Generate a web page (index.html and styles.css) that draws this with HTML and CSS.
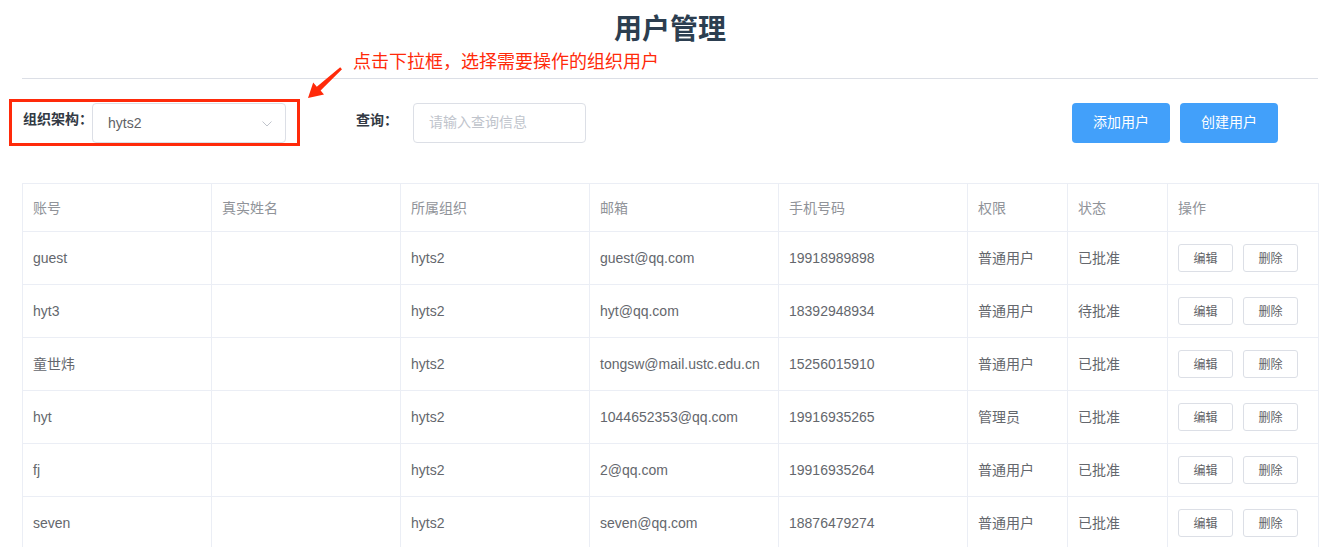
FILE: index.html
```html
<!DOCTYPE html>
<html lang="zh-CN">
<head>
<meta charset="utf-8">
<title>用户管理</title>
<link rel="stylesheet" href="styles.css">
</head>
<body>
<div class="page">
  <div class="head">
    <h1 class="title">用户管理</h1>
  </div>
  <div class="note">点击下拉框，选择需要操作的组织用户</div>
  <svg class="arrow" width="50" height="45" viewBox="0 0 50 45">
    <polygon points="8,38 24,34.5 20.6,30.6 42,9.2 40.2,7.2 16.8,26.8 13.2,22.6" fill="#ff2a0a"/>
  </svg>
  <div class="filters">
    <div class="mark">
      <span class="label">组织架构：</span>
      <div class="select">
        <span class="select-value">hyts2</span>
        <svg class="chev" width="10" height="6" viewBox="0 0 10 6"><path d="M0.5 0.5 L5 5 L9.5 0.5" fill="none" stroke="#c0c4cc" stroke-width="1"/></svg>
      </div>
    </div>
    <div class="query">
      <span class="label label-q">查询：</span>
      <div class="input"><span class="placeholder">请输入查询信息</span></div>
    </div>
    <div class="actions">
      <button class="btn-primary">添加用户</button>
      <button class="btn-primary">创建用户</button>
    </div>
  </div>
  <table class="grid">
    <colgroup>
      <col class="c189"><col class="c189"><col class="c189"><col class="c189"><col class="c189"><col class="c100"><col class="c100"><col class="c151">
    </colgroup>
    <thead>
      <tr><th>账号</th><th>真实姓名</th><th>所属组织</th><th>邮箱</th><th>手机号码</th><th>权限</th><th>状态</th><th>操作</th></tr>
    </thead>
    <tbody>
      <tr><td>guest</td><td></td><td>hyts2</td><td>guest@qq.com</td><td>19918989898</td><td>普通用户</td><td>已批准</td><td><div class="ops"><button class="btn-mini">编辑</button><button class="btn-mini">删除</button></div></td></tr>
      <tr><td>hyt3</td><td></td><td>hyts2</td><td>hyt@qq.com</td><td>18392948934</td><td>普通用户</td><td>待批准</td><td><div class="ops"><button class="btn-mini">编辑</button><button class="btn-mini">删除</button></div></td></tr>
      <tr><td>童世炜</td><td></td><td>hyts2</td><td>tongsw@mail.ustc.edu.cn</td><td>15256015910</td><td>普通用户</td><td>已批准</td><td><div class="ops"><button class="btn-mini">编辑</button><button class="btn-mini">删除</button></div></td></tr>
      <tr><td>hyt</td><td></td><td>hyts2</td><td>1044652353@qq.com</td><td>19916935265</td><td>管理员</td><td>已批准</td><td><div class="ops"><button class="btn-mini">编辑</button><button class="btn-mini">删除</button></div></td></tr>
      <tr><td>fj</td><td></td><td>hyts2</td><td>2@qq.com</td><td>19916935264</td><td>普通用户</td><td>已批准</td><td><div class="ops"><button class="btn-mini">编辑</button><button class="btn-mini">删除</button></div></td></tr>
      <tr><td>seven</td><td></td><td>hyts2</td><td>seven@qq.com</td><td>18876479274</td><td>普通用户</td><td>已批准</td><td><div class="ops"><button class="btn-mini">编辑</button><button class="btn-mini">删除</button></div></td></tr>
    </tbody>
  </table>
</div>
</body>
</html>
```
FILE: styles.css
```css
* { box-sizing: border-box; }
html, body { margin: 0; padding: 0; background: #fff; }
body {
  font-family: "Liberation Sans", "Noto Sans CJK SC", sans-serif;
  font-size: 14px;
  color: #606266;
}
.page {
  position: relative;
  padding: 0 7px 0 22px;
}
.head {
  height: 79px;
  border-bottom: 1px solid #dcdfe6;
}
.title {
  margin: 0;
  padding-top: 13px;
  text-align: center;
  font-family: "Noto Sans CJK SC", sans-serif;
  font-size: 28px;
  line-height: 28px;
  font-weight: 700;
  color: #2c3e50;
}
.note {
  position: absolute;
  left: 353px;
  top: 51px;
  font-family: "Noto Sans CJK SC", sans-serif;
  font-size: 18px;
  line-height: 18px;
  color: #ff2a0a;
  white-space: nowrap;
}
.arrow {
  position: absolute;
  left: 300px;
  top: 60px;
}
.filters {
  display: flex;
  align-items: center;
  margin-top: 20px;
}
.mark {
  display: flex;
  align-items: center;
  margin-left: -13px;
  border: 3px solid #ff2a0a;
  padding: 1px 11px 0 11px;
}
.label {
  font-family: "Noto Sans CJK SC", sans-serif;
  font-weight: 700;
  color: #333a44;
  font-size: 14px;
  line-height: 20px;
  width: 69px;
  white-space: nowrap;
  align-self: flex-start;
  margin-top: 5px;
}
.label-q { width: 57px; margin-top: 6px; }
.select {
  width: 194px;
  height: 40px;
  border: 1px solid #dcdfe6;
  border-radius: 4px;
  display: flex;
  align-items: center;
  justify-content: space-between;
  padding: 0 13px 0 15px;
}
.select-value { color: #606266; font-size: 14px; line-height: 20px; margin-top: -1px; }
.chev { margin-top: 1px; }
.query {
  display: flex;
  align-items: center;
  margin-left: 56px;
}
.input {
  width: 173px;
  height: 40px;
  border: 1px solid #dcdfe6;
  border-radius: 4px;
  display: flex;
  align-items: center;
  padding-left: 15px;
}
.placeholder {
  color: #c0c4cc;
  font-family: "Noto Sans CJK SC", sans-serif;
  font-size: 14px;
  line-height: 20px;
  margin-top: -4px;
}
.actions {
  margin-left: auto;
  margin-right: 40px;
  display: flex;
  gap: 10px;
}
.btn-primary {
  width: 98px;
  height: 40px;
  border: none;
  border-radius: 4px;
  background: #42a0fa;
  color: #fff;
  font-family: "Noto Sans CJK SC", sans-serif;
  font-size: 14px;
  line-height: 20px;
  padding: 0 0 3px 0;
}
.grid {
  margin-top: 37px;
  width: 1296px;
  border-collapse: collapse;
  table-layout: fixed;
  border: 1px solid #ebeef5;
}
.c189 { width: 189px; }
.c100 { width: 100px; }
.c151 { width: 151px; }
.grid th, .grid td {
  border: 1px solid #ebeef5;
  padding: 12px 10px;
  text-align: left;
  white-space: nowrap;
  overflow: hidden;
}
.grid th {
  font-weight: 400;
  color: #909399;
  line-height: 22px;
  padding-bottom: 13px;
  font-family: "Noto Sans CJK SC", sans-serif;
}
.grid td {
  line-height: 28px;
  color: #64676d;
}
.ops {
  display: flex;
  gap: 10px;
  height: 28px;
}
.btn-mini {
  width: 55px;
  height: 28px;
  padding: 0;
  border: 1px solid #dcdfe6;
  border-radius: 3px;
  background: #fff;
  color: #606266;
  font-family: "Noto Sans CJK SC", sans-serif;
  font-size: 12px;
  line-height: 16px;
}
```
